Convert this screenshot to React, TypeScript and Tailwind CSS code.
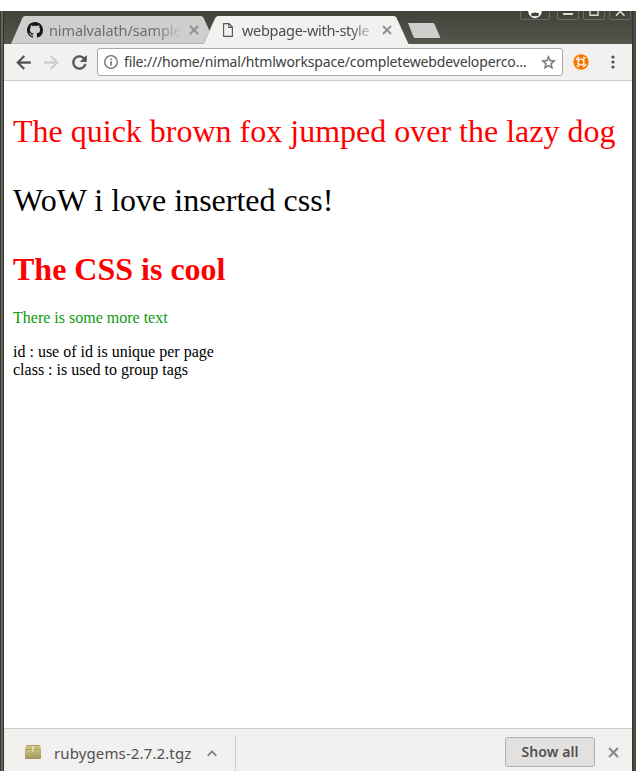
import React from "react";

function TabShape({ fill, base }: { fill: string; base: boolean }) {
  return (
    <svg className="absolute inset-0" width="206" height="28" viewBox="0 0 206 28">
      <path d="M0 28 L11.6 1.6 Q12.4 0 14 0 H190 Q191.6 0 192.4 1.6 L204.5 28 Z" fill={fill} />
      {base && <path d="M1 27.5 H193 L204 3" fill="none" stroke="#b4b3b1" />}
    </svg>
  );
}

function Cross({ size, color, width }: { size: number; color: string; width: number }) {
  return (
    <svg width={size} height={size} viewBox="0 0 10 10" className="shrink-0">
      <path d="M1 1 L9 9 M9 1 L1 9" stroke={color} strokeWidth={width} />
    </svg>
  );
}

function Arrow({ color, className }: { color: string; className: string }) {
  return (
    <svg width="21" height="21" viewBox="0 0 24 24" fill={color} stroke={color} strokeWidth="0.6" className={className}>
      <path d="M20 11H7.83l5.59-5.59L12 4l-8 8 8 8 1.41-1.41L7.83 13H20v-2z" />
    </svg>
  );
}

function TabStrip() {
  return (
    <div className="relative flex h-[33px] overflow-hidden bg-linear-to-b from-[#414239] to-[#55554c] pt-[5px] pl-[7px]">
      <div className="relative h-7 w-[193px] shrink-0">
        <TabShape fill="#cfcecc" base />
        <div className="relative flex h-7 items-center pl-4">
          <svg width="16" height="16" viewBox="0 0 16 16" fill="#18181b" className="shrink-0">
            <path d="M8 0C3.58 0 0 3.58 0 8c0 3.54 2.29 6.53 5.47 7.59.4.07.55-.17.55-.38 0-.19-.01-.82-.01-1.49-2.01.37-2.53-.49-2.69-.94-.09-.23-.48-.94-.82-1.13-.28-.15-.68-.52-.01-.53.63-.01 1.08.58 1.23.82.72 1.21 1.87.87 2.33.66.07-.52.28-.87.51-1.07-1.78-.2-3.64-.89-3.64-3.95 0-.87.31-1.59.82-2.15-.08-.2-.36-1.02.08-2.12 0 0 .67-.21 2.2.82.64-.18 1.32-.27 2-.27.68 0 1.36.09 2 .27 1.53-1.04 2.2-.82 2.2-.82.44 1.1.16 1.92.08 2.12.51.56.82 1.27.82 2.15 0 3.07-1.87 3.75-3.65 3.95.29.25.54.73.54 1.48 0 1.07-.01 1.93-.01 2.2 0 .21.15.46.55.38A8.013 8.013 0 0016 8c0-4.42-3.58-8-8-8z" />
          </svg>
          <div className="ml-[6px] w-[134px] shrink-0 mask-r-from-80% mask-r-to-99% text-[14.5px] leading-7 tracking-[-0.12px] whitespace-nowrap text-[#6f6e6c]">
            nimalvalath/sample
          </div>
          <div className="ml-[6px] flex">
            <Cross size={10} color="#92918f" width={1.9} />
          </div>
        </div>
      </div>
      <div className="relative h-7 w-[206px] shrink-0">
        <TabShape fill="#f2f1f0" base={false} />
        <div className="relative flex h-7 items-center pl-[19px]">
          <svg width="10" height="14" viewBox="0 0 10 14" className="shrink-0">
            <path d="M.6 .6 H6 L9.4 4 V13.4 H.6 Z M5.8 .6 V4.4 H9.4" fill="none" stroke="#555" strokeWidth="1.1" />
          </svg>
          <div className="ml-[9px] w-[135px] shrink-0 mask-r-from-80% mask-r-to-99% text-[14.5px] leading-7 tracking-[-0.3px] whitespace-nowrap text-[#4d4d4d]">
            webpage-with-style
          </div>
          <div className="ml-[5px] flex">
            <Cross size={10} color="#92918f" width={1.9} />
          </div>
        </div>
      </div>
      <svg width="34" height="16" viewBox="0 0 34 16" className="mt-[7px] -ml-[3px] shrink-0">
        <path d="M1 0 H26 Q27 0 27.5 1 L33.5 15 H8 Q7 15 6.5 14 Z" fill="#cfcecc" />
      </svg>
      <svg width="116" height="10" viewBox="0 0 116 10" className="absolute top-0 left-[516px]">
        <g fill="none" stroke="#6c6c64">
          <path d="M0.5 0 V7 Q0.5 8.5 2 8.5 H28 Q29.5 8.5 29.5 7 V0" />
          <path d="M37.5 0 V7 Q37.5 8.5 39 8.5 H57 Q58.5 8.5 58.5 7 V0" />
          <path d="M63.5 0 V7 Q63.5 8.5 65 8.5 H83 Q84.5 8.5 84.5 7 V0" />
          <path d="M89.5 0 V7 Q89.5 8.5 91 8.5 H109 Q110.5 8.5 110.5 7 V0" />
        </g>
        <path d="M8.2 0 A6.8 7.2 0 0 0 21.8 0 Z" fill="#fff" />
        <ellipse cx="15" cy="3.4" rx="4" ry="1.9" fill="#44453d" />
        <rect x="43" y="2" width="10" height="2" fill="#dfdbd2" />
        <path d="M70 0 V4.3 H78 V0" fill="none" stroke="#dfdbd2" strokeWidth="1.4" />
        <path d="M96 4.8 L100.2 .3 L104.400 4.8" fill="none" stroke="#dfdbd2" strokeWidth="1.6" />
      </svg>
    </div>
  );
}

function Toolbar() {
  return (
    <div className="flex h-[37px] items-center border-b border-[#cdcdcd] bg-[#f2f1f0] pl-[8.5px]">
      <Arrow color="#505050" className="shrink-0" />
      <Arrow color="#cecdcc" className="ml-[7px] shrink-0 rotate-180" />
      <svg width="21" height="21" viewBox="0 0 24 24" fill="#505050" stroke="#505050" strokeWidth="0.6" className="ml-[7px] shrink-0">
        <path d="M17.65 6.35A7.958 7.958 0 0 0 12 4c-4.42 0-7.99 3.58-7.99 8s3.57 8 7.99 8c3.73 0 6.84-2.55 7.73-6h-2.08A5.99 5.99 0 0 1 12 18c-3.31 0-6-2.69-6-6s2.69-6 6-6c1.66 0 3.14.69 4.22 1.78L13 11h7V4l-2.35 2.35z" />
      </svg>
      <div className="ml-[7.5px] flex h-7 w-[466px] shrink-0 items-center rounded-[3px] border border-[#aaa9a8] bg-white pl-[5px]">
        <svg width="16" height="16" viewBox="0 0 16 16" fill="none" className="shrink-0">
          <circle cx="8" cy="8" r="6.3" stroke="#6e6e6e" strokeWidth="1.3" />
          <path d="M8 7.2 V11.4 M8 4.5 V6" stroke="#6e6e6e" strokeWidth="1.6" />
        </svg>
        <div className="ml-[5px] w-[410px] shrink-0 text-[14px] leading-6 tracking-[-0.15px] whitespace-nowrap text-[#404040]">
          file:///home/nimal/htmlworkspace/completewebdeveloperco...
        </div>
        <svg width="17" height="17" viewBox="0 0 24 24" fill="#777" stroke="#777" strokeWidth="0.6" className="ml-[6px] shrink-0">
          <path d="M22 9.24l-7.19-.62L12 2 9.19 8.63 2 9.24l5.46 4.73L5.82 21 12 17.27 18.18 21l-1.63-7.03L22 9.24zM12 15.4l-3.76 2.27 1-4.28-3.32-2.88 4.38-.38L12 6.1l1.71 4.04 4.38.38-3.32 2.88 1 4.28L12 15.4z" />
        </svg>
      </div>
      <svg width="16" height="16" viewBox="0 0 16 16" className="ml-[10px] shrink-0">
        <circle cx="8" cy="8" r="7.7" fill="#f57900" />
        <circle cx="8" cy="8" r="3" fill="none" stroke="#fff" strokeWidth="1.6" />
        <path d="M3.2 6.1 Q3.9 4.1 6 3.3 M10.2 3.2 L12.2 4.7 M12.8 9.9 Q12.1 11.9 10 12.7 M5.8 12.8 L3.8 11.3" fill="none" stroke="#fff" strokeWidth="1.5" />
        <path d="M8 3.7 V5.5 M8 10.500 V12.300 M3.700 8 H5.500 M10.500 8 H12.300" stroke="#f57900" strokeWidth="1" />
        <circle cx="8" cy="8" r="1.6" fill="#f57900" />
      </svg>
      <svg width="4" height="14" viewBox="0 0 4 14" fill="#505050" className="ml-[22px] shrink-0">
        <circle cx="2" cy="2" r="1.6" />
        <circle cx="2" cy="7" r="1.6" />
        <circle cx="2" cy="12" r="1.6" />
      </svg>
    </div>
  );
}

function Page() {
  return (
    <main className="flex h-[647px] flex-col bg-white px-[9px] pt-8 font-['Liberation_Serif',serif] text-base leading-[18px] text-black">
      <p className="mb-8 text-[32px] leading-[37px] whitespace-nowrap text-[#ff0000]">The quick brown fox jumped over the lazy dog</p>
      <p className="mb-8 text-[32px] leading-[37px]">WoW i love inserted css!</p>
      <h1 className="mb-[21px] text-[32px] leading-[37px] font-bold text-[#ff0000]">The CSS is cool</h1>
      <p className="mb-4 text-[#0c990c]">There is some more text</p>
      <p>
        id : use of id is unique per page
        <br />
        class : is used to group tags
      </p>
    </main>
  );
}

function DownloadShelf() {
  return (
    <footer className="flex h-[43px] border-t border-[#cdcdcd] bg-[#f2f1f0]">
      <div className="mt-[6px] flex h-9 w-[232px] items-center border-r border-[#cdcdcd] pl-[21px]">
        <svg width="16" height="14" viewBox="0 0 16 14" className="mb-[3px] shrink-0">
          <defs>
            <linearGradient id="parcel" x2="0" y2="1">
              <stop stopColor="#cabf84" />
              <stop offset="0.35" stopColor="#c9bd80" />
              <stop offset="1" stopColor="#a0935a" />
            </linearGradient>
          </defs>
          <path d="M1.500 0 H14.500 L16 3.500 V13 Q16 14 15 14 H1 Q0 14 0 13 V3.500 Z" fill="url(#parcel)" />
          <path d="M.3 4.500 H15.700 M1.500 .5 H14.500" stroke="#aa9e64" strokeWidth="0.900" />
          <path d="M7.200 1 H8.800 V6.500 H7.200 Z" fill="#e6e0bd" />
        </svg>
        <span className="ml-[13px] w-[138px] shrink-0 text-[15px] leading-6 tracking-[0.12px] whitespace-nowrap text-[#505050]">rubygems-2.7.2.tgz</span>
        <svg width="10" height="7" viewBox="0 0 10 7" className="ml-[15px] shrink-0">
          <path d="M.7 5.8 L5 1.4 L9.3 5.8" fill="none" stroke="#858585" strokeWidth="1.9" />
        </svg>
      </div>
      <button className="mt-2 ml-[269px] h-[30px] w-[90px] shrink-0 rounded-[3px] border border-[#b2b1b0] bg-[#e2e1e0] text-[14px] leading-7 font-semibold tracking-[0.1px] text-[#505050]">
        Show all
      </button>
      <div className="mt-[17.5px] ml-[12.5px]">
        <Cross size={11} color="#888" width={1.9} />
      </div>
    </footer>
  );
}

export default function App() {
  return (
    <div className="h-[782px] w-[636px] overflow-hidden bg-white pt-[11px] font-['Noto_Sans',sans-serif]">
      <div className="flex h-[760px] bg-[#45463e]">
        <div className="w-1 shrink-0 border-x border-l-[#383832] border-r-[#30302b] bg-[#68675f]" />
        <div className="w-[628px] shrink-0">
          <TabStrip />
          <Toolbar />
          <Page />
          <DownloadShelf />
        </div>
        <div className="w-1 shrink-0 border-l border-[#34352e] bg-[#494a42]" />
      </div>
    </div>
  );
}
